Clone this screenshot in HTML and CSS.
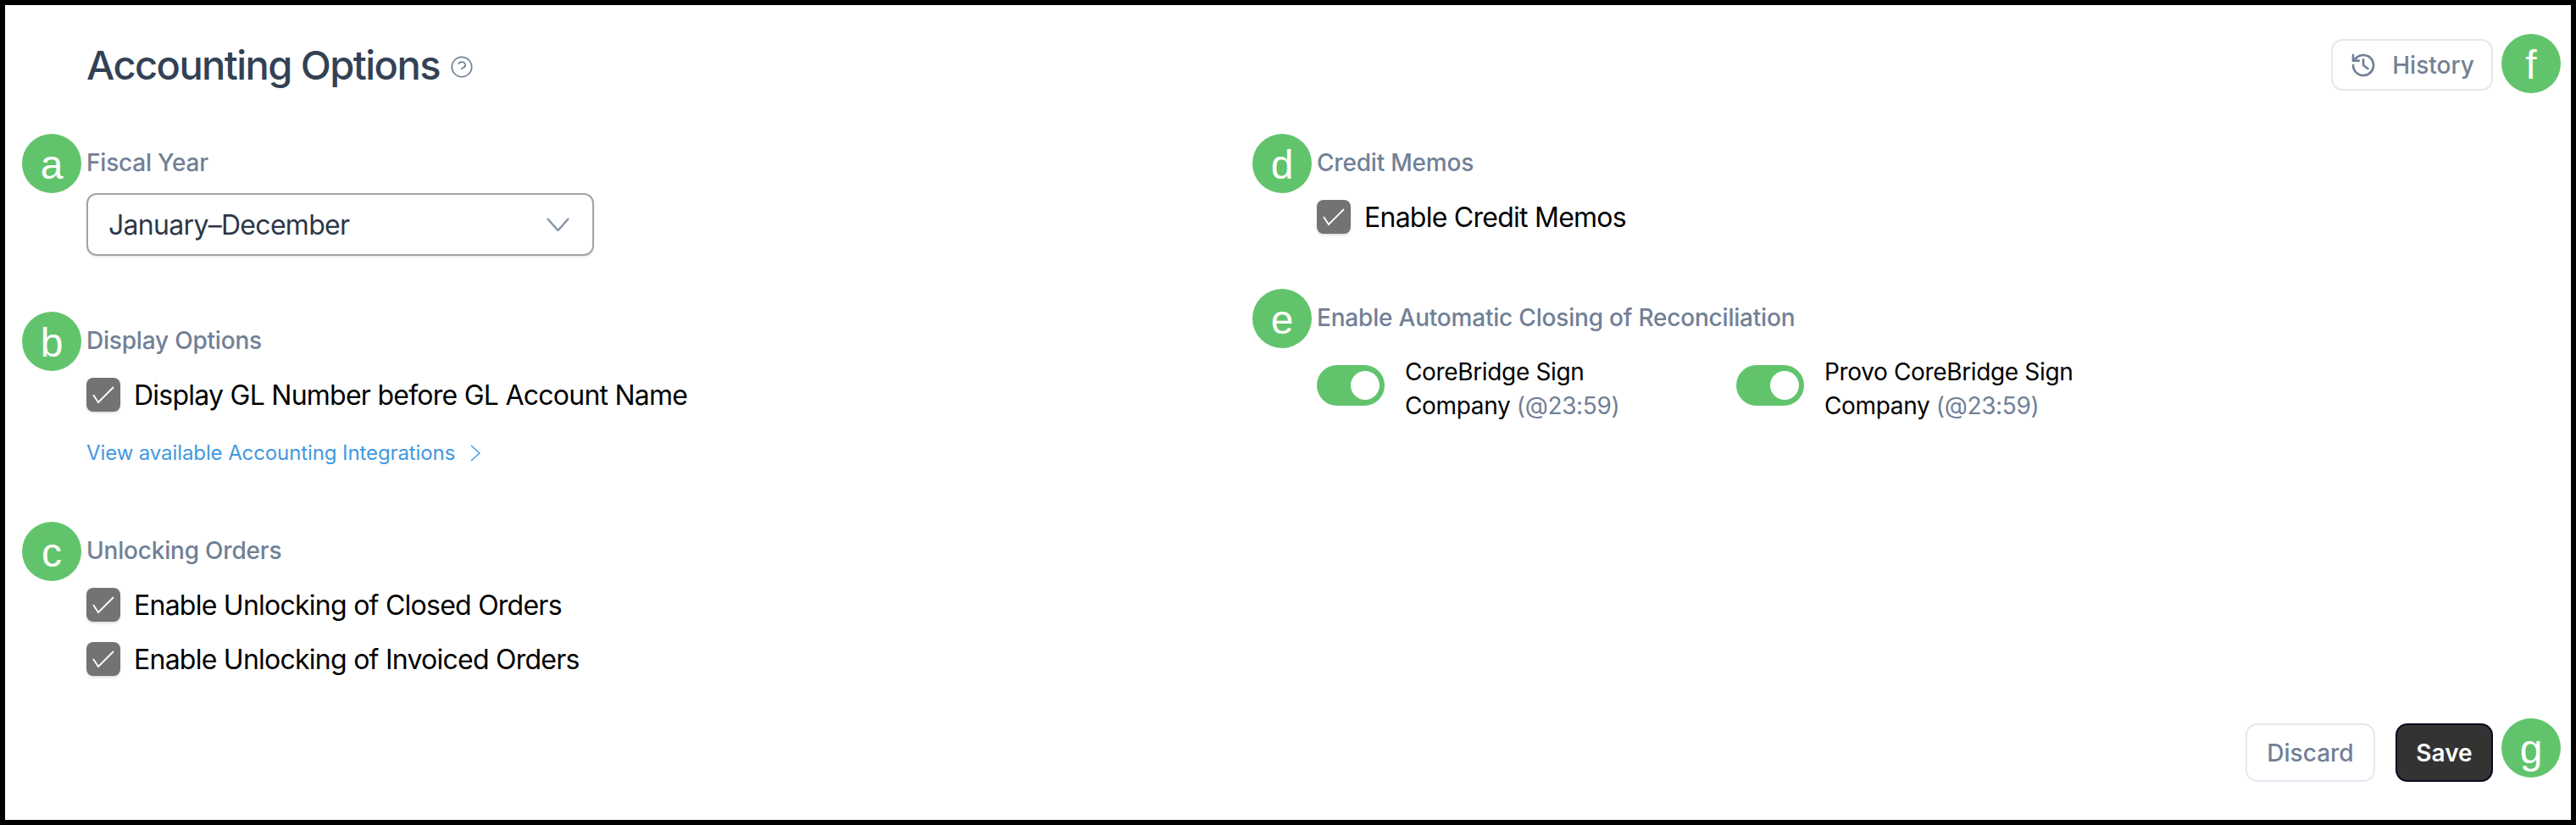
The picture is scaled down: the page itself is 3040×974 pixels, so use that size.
FILE: index.html
```html
<!DOCTYPE html>
<html lang="en">
<head>
    <meta charset="UTF-8">
    <title>Accounting Options</title>
    <link rel="stylesheet" href="styles.css">
</head>
<body>
    <div class="page">
        <header class="top">
            <div class="title-wrap">
                <h1>Accounting Options</h1>
                <svg class="help" viewBox="0 0 24 24"><path d="M8.6 9.2c.5-1.3 1.8-2.2 3.4-2.2 2 0 3.6 1.3 3.6 3 0 1.4-1.1 2.5-2.7 2.9-.5.1-.9.6-.9 1.1v.5m0 3h.01M22 12a10 10 0 11-20 0 10 10 0 0120 0z"/></svg>
            </div>
            <div class="with-badge">
                <button class="btn btn-light btn-history">
                    <svg class="history-icon" viewBox="0 0 24 24"><path d="M3 12a9 9 0 1 0 3-6.7L3 8"/><path d="M3 3v5h5"/><path d="M12 7v5l4 3"/></svg>
                    History
                </button>
                <span class="badge badge-right">f</span>
            </div>
        </header>

        <main class="columns">
            <div class="col">
                <section class="group group-year">
                    <span class="badge badge-left">a</span>
                    <div class="label label-select">Fiscal Year</div>
                    <div class="select">
                        <span>January–December</span>
                        <svg class="select-arrow" viewBox="0 0 27 16"><path d="M1 1l12.5 14L26 1"/></svg>
                    </div>
                </section>

                <section class="group group-display">
                    <span class="badge badge-left">b</span>
                    <div class="label">Display Options</div>
                    <label class="check">
                        <span class="box"><svg viewBox="0 0 40 40"><path d="M8 20l6 9L32 11"/></svg></span>
                        Display GL Number before GL Account Name
                    </label>
                    <a class="link" href="#">View available Accounting Integrations
                        <svg viewBox="0 0 12 20"><path d="M1 1l10 9-10 9"/></svg>
                    </a>
                </section>

                <section class="group">
                    <span class="badge badge-left">c</span>
                    <div class="label">Unlocking Orders</div>
                    <label class="check">
                        <span class="box"><svg viewBox="0 0 40 40"><path d="M8 20l6 9L32 11"/></svg></span>
                        Enable Unlocking of Closed Orders
                    </label>
                    <label class="check">
                        <span class="box"><svg viewBox="0 0 40 40"><path d="M8 20l6 9L32 11"/></svg></span>
                        Enable Unlocking of Invoiced Orders
                    </label>
                </section>
            </div>

            <div class="col">
                <section class="group group-credit">
                    <span class="badge badge-left">d</span>
                    <div class="label">Credit Memos</div>
                    <label class="check">
                        <span class="box"><svg viewBox="0 0 40 40"><path d="M8 20l6 9L32 11"/></svg></span>
                        Enable Credit Memos
                    </label>
                </section>

                <section class="group">
                    <span class="badge badge-left">e</span>
                    <div class="label label-toggles">Enable Automatic Closing of Reconciliation</div>
                    <div class="toggles">
                        <div class="toggle-item">
                            <span class="toggle"><span class="knob"></span></span>
                            <div class="toggle-text">CoreBridge Sign Company <span class="muted">(@23:59)</span></div>
                        </div>
                        <div class="toggle-item">
                            <span class="toggle"><span class="knob"></span></span>
                            <div class="toggle-text">Provo CoreBridge Sign Company <span class="muted">(@23:59)</span></div>
                        </div>
                    </div>
                </section>
            </div>
        </main>

        <footer class="bottom">
            <button class="btn btn-light btn-discard">Discard</button>
            <div class="with-badge">
                <button class="btn btn-save">Save</button>
                <span class="badge badge-right">g</span>
            </div>
        </footer>
    </div>
</body>
</html>
```

FILE: styles.css
```css
* {
    box-sizing: border-box;
}
body {
    margin: 0;
    font-family: Inter, "Noto Sans", sans-serif;
    background-color: #fff;
}
.page {
    display: flex;
    flex-direction: column;
    width: 3040px;
    height: 974px;
    padding: 40px 92px 45px 96px;
    border: 6px solid #000;
    background-color: #fff;
}
.top {
    display: flex;
    justify-content: space-between;
    align-items: center;
    height: 61px;
}
.title-wrap {
    display: flex;
    align-items: center;
    gap: 12px;
}
h1 {
    margin: 0;
    font-size: 47px;
    font-weight: 550;
    line-height: 64px;
    letter-spacing: -1.55px;
    color: #334155;
}
.help {
    width: 28px;
    height: 28px;
    margin-top: 4px;
    fill: none;
    stroke: #718096;
    stroke-width: 1.5;
}
.with-badge {
    position: relative;
}
.badge {
    position: absolute;
    display: flex;
    align-items: center;
    justify-content: center;
    width: 70px;
    height: 70px;
    padding-top: 4px;
    border-radius: 50%;
    background-color: #61c46c;
    color: #fff;
    font-family: "Liberation Sans", Arial, sans-serif;
    font-size: 48px;
    line-height: 1;
}
.badge-left {
    left: -76px;
    top: -14px;
}
.badge-right {
    right: -80px;
    top: -6px;
}
.btn {
    display: inline-flex;
    align-items: center;
    justify-content: center;
    font-family: inherit;
    font-size: 28px;
    font-weight: 500;
    border-radius: 14px;
    cursor: pointer;
}
.btn-light {
    background-color: #fff;
    border: 2px solid #e2e8f0;
    color: #718096;
}
.btn-history {
    width: 191px;
    height: 61px;
    gap: 18px;
    padding-left: 6px;
}
.history-icon {
    width: 32px;
    height: 32px;
    fill: none;
    stroke: #718096;
    stroke-width: 2;
    stroke-linecap: round;
    stroke-linejoin: round;
}
.btn-discard {
    width: 153px;
    height: 69px;
    margin-right: 24px;
}
.btn-save {
    width: 115px;
    height: 69px;
    background-color: #333;
    border: 2px solid #0a0a1e;
    color: #fff;
    font-weight: 600;
}
.columns {
    display: grid;
    grid-template-columns: 1452px 1fr;
    margin-top: 65px;
}
.group {
    position: relative;
}
.group-year {
    margin-bottom: 80px;
}
.group-display {
    margin-bottom: 75px;
}
.group-credit {
    margin-bottom: 79px;
}
.label {
    margin-bottom: 24px;
    font-size: 28px;
    font-weight: 500;
    line-height: 40px;
    letter-spacing: -0.2px;
    color: #718096;
}
.label-select {
    margin-bottom: 16px;
}
.label-toggles {
    margin-bottom: 24px;
}
.select {
    display: flex;
    justify-content: space-between;
    align-items: center;
    width: 599px;
    height: 74px;
    padding: 0 27px 0 24px;
    border: 2px solid #a3a3a3;
    border-radius: 12px;
    box-shadow: 0 2px 3px rgba(0, 0, 0, 0.08);
    font-size: 32px;
    letter-spacing: -0.7px;
    color: #2d3748;
}
.select-arrow {
    width: 27px;
    height: 16px;
    fill: none;
    stroke: #8795a8;
    stroke-width: 2.5;
}
.check {
    display: flex;
    align-items: center;
    gap: 16px;
    height: 40px;
    margin-bottom: 24px;
    font-size: 32px;
    letter-spacing: -0.75px;
    color: #000;
}
.check:last-child {
    margin-bottom: 0;
}
.box {
    width: 40px;
    height: 40px;
    border-radius: 8px;
    background-color: #737373;
    box-shadow: 0 2px 3px rgba(0, 0, 0, 0.12);
}
.box svg {
    display: block;
    width: 40px;
    height: 40px;
    fill: none;
    stroke: #fff;
    stroke-width: 1.8;
}
.link {
    display: flex;
    align-items: center;
    gap: 18px;
    height: 40px;
    margin-top: 29px;
    font-size: 24px;
    line-height: 40px;
    letter-spacing: -0.1px;
    color: #4299e1;
    text-decoration: none;
}
.link svg {
    width: 12px;
    height: 20px;
    fill: none;
    stroke: #4299e1;
    stroke-width: 1.5;
}
.toggles {
    display: flex;
    gap: 82px;
}
.toggle-item {
    display: flex;
    align-items: flex-start;
    gap: 24px;
}
.toggle {
    position: relative;
    display: block;
    flex: none;
    width: 80px;
    height: 48px;
    margin-top: 12px;
    border-radius: 24px;
    background-color: #61c46c;
}
.knob {
    position: absolute;
    right: 6px;
    top: 7px;
    width: 34px;
    height: 34px;
    border-radius: 50%;
    background-color: #fff;
}
.toggle-text {
    width: 309px;
    font-size: 28px;
    line-height: 40px;
    letter-spacing: -0.35px;
    color: #000;
}
.muted {
    color: #718096;
}
.bottom {
    display: flex;
    justify-content: flex-end;
    margin-top: auto;
}
```
